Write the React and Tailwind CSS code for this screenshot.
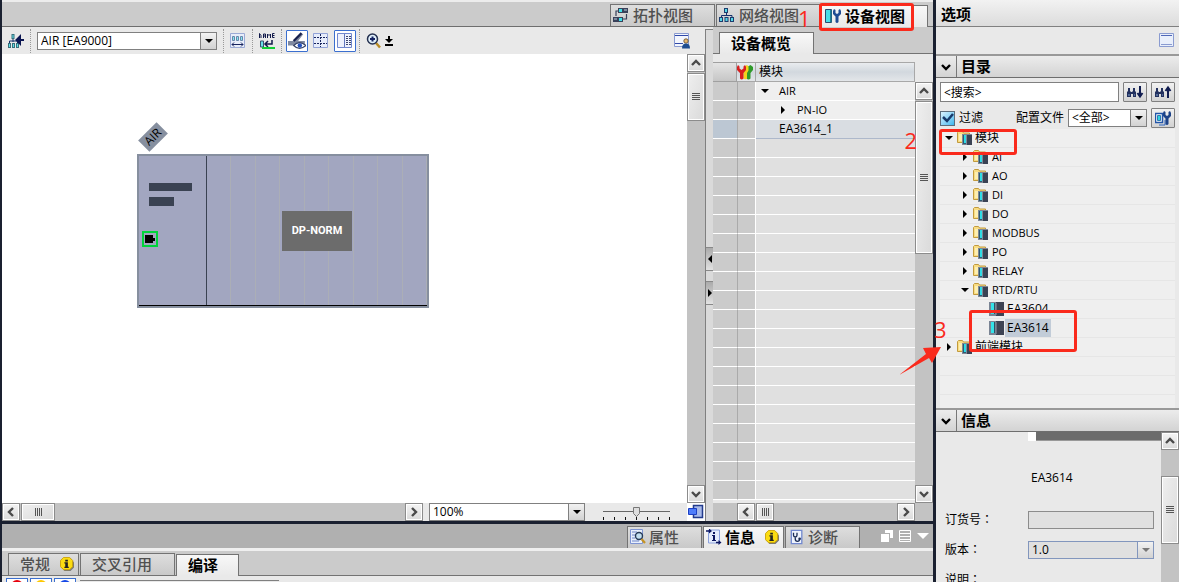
import React, { useState } from 'react';

// --- Data ---
const GROUPS = ['AI', 'AO', 'DI', 'DO', 'MODBUS', 'PO', 'RELAY'];

const OVERVIEW_ROWS = [
    { name: 'AIR', arrow: 'down' },
    { name: 'PN-IO', arrow: 'right', nested: true },
    { name: 'EA3614_1', selected: true },
];

const EMPTY_ROWS = Array.from({ length: 19 }, (_, i) => i);
const SLOTS = Array.from({ length: 9 }, (_, i) => i);

const FACE = 'bg-gradient-to-b from-[#f2f2f2] to-[#d2d2d2]';

// --- Small glyphs ---
const Arrow = ({ dir, className = '' }) => (
    <svg viewBox="0 0 8 8" className={`w-2 h-2 shrink-0 ${className}`} fill="currentColor">
        {dir === 'down' ? <path d="M0 2h8L4 6z" /> : <path d="M2 0v8l4-4z" />}
    </svg>
);

const Chevron = ({ dir }) => {
    const paths = { up: 'M2 8l4-4 4 4', down: 'M2 4l4 4 4-4', left: 'M8 2L4 6l4 4', right: 'M4 2l4 4-4 4' };
    return (
        <svg viewBox="0 0 12 12" className="w-3 h-3" fill="none" stroke="currentColor" strokeWidth="2.4">
            <path d={paths[dir]} />
        </svg>
    );
};

const ScrollButton = ({ dir, label }) => (
    <button aria-label={label} className="w-[18px] h-[18px] shrink-0 flex items-center justify-center border border-[#8c8c8c] bg-gradient-to-b from-[#f4f4f4] to-[#dadada] text-[#4a4a4a] shadow-[inset_0_0_0_1px_#fff]">
        <Chevron dir={dir} />
    </button>
);

const Thumb = ({ vertical, className }) => (
    <div className={`flex items-center justify-center shrink-0 border border-[#8c8c8c] shadow-[inset_0_0_0_1px_#fff] bg-gradient-to-br from-[#efefef] to-[#dadada] ${className}`}>
        <svg viewBox="0 0 8 8" className={`w-2 h-2 ${vertical ? '' : 'rotate-90'}`} stroke="#555" strokeWidth="1">
            <path d="M0 .5h8M0 2.5h8M0 4.5h8M0 6.5h8" />
        </svg>
    </div>
);

const SelectBox = ({ label, options, className = '', disabled }) => (
    <div className={`relative h-[18px] border bg-white ${disabled ? 'border-[#8296bd]' : 'border-[#808080]'} ${className}`}>
        <select
            aria-label={label}
            disabled={disabled}
            className={`appearance-none block w-full h-full pl-[3px] pr-4 text-xs leading-4 opacity-100 text-black outline-none ${disabled ? 'bg-[#e0e0e0]' : 'bg-white'}`}
        >
            {options.map((o) => <option key={o}>{o}</option>)}
        </select>
        <span className={`pointer-events-none absolute right-0 top-0 bottom-0 w-4 flex items-center justify-center border-l ${FACE} ${disabled ? 'border-[#8296bd] text-[#777]' : 'border-[#808080] text-black'}`}>
            <Arrow dir="down" />
        </span>
    </div>
);

// --- Icons ---
const Icon = ({ children, className = '' }) => (
    <svg viewBox="0 0 16 16" className={`w-4 h-4 shrink-0 ${className}`} fill="none">{children}</svg>
);

const TopologyIcon = () => (
    <Icon>
        <path d="M6 4H3v5M10 12h3.500V7" stroke="#39415a" strokeWidth="1.200" />
        <path d="M5 1h10v5H5zM0 10h10v5H0z" fill="#39415a" />
        <path d="M6 2h3v3H6zM6 11h3v3H6z" fill="#3fe0ea" />
        <path d="M11 2h3v2h-3zM1 11h3v2H1z" fill="#7c879b" />
    </Icon>
);

const NetworkIcon = () => (
    <Icon>
        <path d="M7.500 6v3M2.500 10V8.500h10.500V10" stroke="#17306b" />
        <path d="M5 1h4v5H5zM0 10h4v5H0zM5.500 10h4v5h-4zM11 10h4v5h-4z" fill="#1d3c6e" />
        <path d="M6 2h2v3H6zM1 11h2v3H1zM6.500 11h2v3h-2zM12 11h2v3h-2z" fill="#55d8e6" />
    </Icon>
);

// Double-ended wrench with an open jaw on top
const WrenchPath = ({ x = 0, fill }) => (
    <path transform={`translate(${x} 0)`} d="M1 1L0 3v3l2.500 2.500V14q1.500 2 3 0V8.500L8 6V3L7 1 5.500 2v3L4 6 2.500 5V2z" fill={fill} />
);

const WrenchesIcon = () => (
    <Icon>
        <path d="M11 2.500l2.500-1.500L16 3v3l-2.500 3v5.500q-2 2-4 0V8z" fill="#2f9a2b" />
        <path d="M7.500 2.500L10 1l1.500 1.500v4L10 9v5.500q-1.500 1.500-3.500 0V8z" fill="#f4d21c" />
        <path d="M1 1L0 3v3l3 3v5.500q1.500 2 3.500 0V9L9 6V3L8 1 6.500 2.500v2L4.500 6l-2-1.500v-2z" fill="#d71f1f" />
    </Icon>
);

const DeviceIcon = () => (
    <Icon>
        <path d="M.5 1.500h6v13h-6z" fill="#48dfe8" stroke="#284d70" />
        <path d="M5 2h1.500v12H5z" fill="#1c7f96" />
        <WrenchPath x={8} fill="#204c94" />
    </Icon>
);

const FolderIcon = () => (
    <Icon>
        <path d="M.5 12.500V2.500l1-1h4l1 1.500h6v9.500z" fill="#f8dc82" stroke="#c29a3c" />
        <path d="M2 4h9v7H2z" fill="#fdeeb0" />
        <path d="M5 4h10v11H5z" fill="#7f8795" />
        <path d="M6 5h3v9H6z" fill="#2d5a72" />
        <path d="M7 5h2v8H7z" fill="#2fdce6" />
        <path d="M10 5h5v10h-5z" fill="#3a4254" />
    </Icon>
);

const ModuleIcon = () => (
    <Icon>
        <path d="M0 1h7v14H0z" fill="#7a8494" />
        <path d="M2 2h3v11H2z" fill="#35e2e8" />
        <path d="M5 2h1v11H5z" fill="#2c5365" />
        <path d="M7 1h8v14H7z" fill="#3d4353" />
        <path d="M7 2h1v12H7z" fill="#69707f" />
    </Icon>
);

const WindowIcon = () => (
    <Icon>
        <path d="M.5.5h14v13H.5z" fill="#e9effb" stroke="#8a9bd0" />
        <path d="M2 2.500h11" stroke="#5068b8" />
        <path d="M2 11.500h11" stroke="#8a9bd0" />
    </Icon>
);

const UserWindowIcon = () => (
    <Icon>
        <path d="M.5.5h14v13H.5z" fill="#f3f6fd" stroke="#8a9bd0" />
        <path d="M1 2.500h13M1 10.500h8" stroke="#3049a8" strokeWidth="1.200" />
        <circle cx="12" cy="8" r="2.200" fill="#e6b870" stroke="#5a4528" strokeWidth=".8" />
        <path d="M8 15.500q0-5 4-5t4 5z" fill="#1f4d90" />
    </Icon>
);

const InfoBadge = () => (
    <Icon className="w-[14px]! h-[14px]!">
        <path d="M5 2h7l4 4v6l-4 4H5l-3-4z" fill="#777" />
        <path d="M4 .5h7L14.500 4v7L11 14.500H4L.5 11V4z" fill="#fbdc12" stroke="#c79c00" />
        <path d="M6 3h3v2H6zM5 6h4v5h1v1.500H5V11h1V7.500H5z" fill="#222" />
    </Icon>
);

const PropertyIcon = () => (
    <Icon>
        <path d="M.5.5h12v14H.5z" fill="#e8effc" stroke="#7d93d2" />
        <path d="M2 3h5M2 6h3M2 9h3M2 12h7" stroke="#6f86c8" />
        <circle cx="9" cy="7" r="3.500" fill="#c3dff0" stroke="#263a58" strokeWidth="1.400" />
        <path d="M11.500 10l3.500 4" stroke="#c59325" strokeWidth="2.200" />
    </Icon>
);

const InfoIcon = () => (
    <Icon>
        <path d="M2.500 1h11v13h-11z" fill="#e3ebfb" stroke="#8aa0dc" />
        <path d="M0 2h4M10 13.500h3" stroke="#0b1660" strokeWidth="1.500" />
        <path d="M3-.5L6 2 3 4.500zM12.500 11l3 2.500-3 2.500z" fill="#0b1660" />
        <path d="M7 3h2v2H7zM6 6h3v5h1v1H6v-1h1V7H6z" fill="#0b1660" />
    </Icon>
);

const DiagnosisIcon = () => (
    <Icon className="w-[14px]!">
        <path d="M1.500.5h12v15h-12z" fill="#eef3fd" stroke="#7188cf" strokeWidth="1.500" />
        <path d="M4 3v3q0 2 2 2t2-2V3M6 8v2q0 3 2.500 3t2.500-3" stroke="#1c2d55" strokeWidth="1.500" />
        <circle cx="11" cy="10" r="1.500" fill="#1c2d55" />
    </Icon>
);

const BinocularsIcon = ({ up }) => (
    <Icon className="w-[18px]! -mx-px">
        <path d="M0 13V8l1-1V4h2v3l1 1h1l1-1V4h2v3l1 1v5H6v-3H4v3z" fill="#22305e" />
        <path d="M1 11h2M7 11h1" stroke="#7fa1cc" />
        {up ? <path d="M13 14V4M10.500 7L13 3.500 15.500 7" stroke="#101c50" strokeWidth="2" />
            : <path d="M13 2v10M10.500 9l2.500 3.500L15.500 9" stroke="#101c50" strokeWidth="2" />}
    </Icon>
);

const ProfileIcon = () => (
    <Icon>
        <path d="M.5 3.500h7v9h-7z" fill="#fff" stroke="#2355a8" strokeWidth="1.500" />
        <path d="M2.500 5.500h3v5h-3z" fill="#30d4e0" stroke="#2a7cb0" />
        <path d="M4 15h6v-5" stroke="#2f66c0" />
        <WrenchPath x={8} fill="#1d4388" />
    </Icon>
);

const ToolButton = ({ label, active, children }) => (
    <button aria-label={label} className={`w-[22px] h-[22px] flex items-center justify-center shrink-0 ${active ? 'border border-[#3b6fcf] bg-white rounded-[1px]' : ''}`}>
        {children}
    </button>
);

const Divider = () => <span className="h-6 border-l border-dotted border-[#999] mx-[3px]" />;

// --- Tabs ---
const Tab = ({ active, className = '', children }) => (
    <button className={`relative flex items-center h-[22px] shrink-0 border border-[#737373] border-b-0 pb-0.5 text-[15px] leading-5 whitespace-nowrap ${active ? 'bg-gradient-to-b from-[#f8f8f8] to-[#e9e9e9] font-bold text-black' : 'bg-gradient-to-b from-[#dedede] to-[#c9c9c9] font-medium text-[#505050]'} ${className}`}>
        {children}
    </button>
);

const Mark = ({ className, children }) => (
    <span className={`absolute z-20 pointer-events-none font-['Open_Sans',sans-serif] font-normal text-[22px] leading-6 text-[#fa2a1c] ${className}`}>{children}</span>
);

const RedBox = ({ className }) => (
    <span className={`absolute z-20 pointer-events-none rounded-[3px] border-3 border-[#fa2a1c] ${className}`} />
);

const ViewTabs = () => (
    <div className="h-[27px] shrink-0 flex items-end justify-end gap-px border-t-2 border-t-[#ececec] border-b border-b-[#6e6e6e] bg-[#cbcbcb] pr-[5px]">
        <Tab className="w-[105px] gap-1 pl-0.5"><TopologyIcon />拓扑视图</Tab>
        <Tab className="w-[104px] gap-1 pl-0.5"><NetworkIcon />网络视图</Tab>
        <Tab active className="w-[107px] gap-1 pl-[3px] -mb-px">
            <DeviceIcon />设备视图
            <RedBox className="-left-[3px] -top-[3px] w-[95px] h-7" />
            <Mark className="-left-6 top-0">1</Mark>
        </Tab>
    </div>
);

// --- Editor ---
const EditorToolbar = () => (
    <div className="h-[27px] shrink-0 flex items-center bg-[#e9e9e9] pl-[3px]">
        <ToolButton label="网络">
            <Icon className="w-[18px]!">
                <path d="M5 4v5M1.500 10V8h8v2" stroke="#17306b" />
                <path d="M3.500 1h3v5h-3zM0 10h3v5H0zM4 10h3v5H4zM8 10h3v5H8z" fill="#37707c" />
                <path d="M4.500 2h1v3h-1zM1 11h1v3H1zM5 11h1v3H5zM9 11h1v3H9z" fill="#62e0e8" />
                <path d="M16 7h-6M12 3.500L8.500 7l3.500 3.500z" stroke="#0c1652" strokeWidth="2" fill="#0c1652" />
            </Icon>
        </ToolButton>
        <Divider />
        <SelectBox label="设备" options={['AIR [EA9000]']} className="w-[180px] mx-[3px]" />
        <Divider />
        <ToolButton label="地址">
            <Icon>
                <path d="M.5.5h14v14H.5z" fill="#e8edfa" stroke="#9cabd6" />
                <path d="M2.500 3.500h2v4h-2zM6.500 3.500h2v4h-2zM10.500 3.500h2v4h-2z" fill="#80e8f0" stroke="#6987aa" />
                <path d="M2 11.500h11M4 9.500l-2 2 2 2M11 9.500l2 2-2 2" stroke="#17245e" />
            </Icon>
        </ToolButton>
        <Divider />
        <ToolButton label="名称">
            <Icon>
                <path d="M.5 5V.5L2 2.500V5M4.500 5V1h2v4M4.500 3h2M8.500 5V1l1.500 1.500L11.500 1v4M15.500.5h-2v4h2M13.500 2.500h2" stroke="#11194a" />
                <path d="M1.500 8h3v6h-3z" fill="#6be0e8" stroke="#365470" />
                <path d="M13 7v4H6M9 8l-3 3 3 3" stroke="#11194a" strokeWidth="1.500" />
                <path d="M3 15h13" stroke="#12cf35" strokeWidth="2" />
            </Icon>
        </ToolButton>
        <Divider />
        <div className="flex gap-0.5 pl-px">
            <ToolButton label="显示模块" active>
                <Icon className="w-[18px]! h-[18px]!">
                    <path d="M0 8h5l7-7 1.500 1L9 8h6v4H0z" fill="#8089a0" />
                    <path d="M5 8l7-7" stroke="#17204e" strokeWidth="2" />
                    <path d="M5 12q5-5 11 0-6 5-11 0z" fill="#fff" stroke="#394466" />
                    <circle cx="10.500" cy="12" r="2" fill="#2451bd" />
                </Icon>
            </ToolButton>
            <ToolButton label="网格">
                <Icon>
                    <path d="M.5.5h14v14H.5z" fill="#e6ecfb" stroke="#91a2d7" />
                    <path d="M1 4.500h13M1 10.500h13M7.500 1v13" stroke="#17245e" strokeDasharray="2 1" />
                </Icon>
            </ToolButton>
            <ToolButton label="表格" active>
                <Icon>
                    <path d="M.5.5h14v14H.5z" fill="#eef2fd" stroke="#7188cf" />
                    <path d="M7.500 1v13" stroke="#6277bd" />
                    <path d="M9 3.500h5M9 5.500h5M9 7.500h5M9 9.500h5M9 11.500h5" stroke="#3c4770" strokeDasharray="2 1" />
                </Icon>
            </ToolButton>
        </div>
        <Divider />
        <ToolButton label="缩放">
            <Icon>
                <path d="M10 10l4 4.500" stroke="#b98b24" strokeWidth="2.500" />
                <circle cx="6.500" cy="6" r="5" fill="#e0effa" stroke="#24304f" strokeWidth="1.500" />
                <path d="M4 6h5M6.500 3.500v5" stroke="#132263" strokeWidth="2" />
            </Icon>
        </ToolButton>
        <svg viewBox="0 0 8 10" className="w-2 h-[10px]"><path d="M3 0h2v3h3L4 7 0 3h3zM0 8h8v2H0z" /></svg>
        <span className="ml-auto mr-3"><ToolButton label="保存窗口设置"><UserWindowIcon /></ToolButton></span>
    </div>
);

const Rack = () => (
    <>
        <div className="absolute left-[138px] top-[75px] w-[26px] h-4 -rotate-45 bg-[#868f9f] text-xs leading-4 text-center">AIR</div>
        <div className="absolute left-[135px] top-[100px] w-[292px] h-[154px] flex border-2 border-[#868f9f] bg-[#a2a6c0]">
            <div className="w-[68px] shrink-0 border-r border-[#3a4252] pl-[10px] pt-[27px]">
                <div className="w-[43px] h-2 bg-[#3a4252]" />
                <div className="w-[25px] h-[9px] mt-1.5 bg-[#3a4252]" />
                <div className="w-4 h-4 mt-[25px] -ml-[7px] border-2 border-[#00d43a] flex items-center pl-px">
                    <div className="w-2 h-2 bg-black" />
                    <div className="w-0.5 h-[3px] bg-black" />
                </div>
            </div>
            {SLOTS.map((s) => <div key={s} className="flex-1 border-r border-[#abaeb6] last:border-r-0" />)}
            <div className="absolute left-0 right-0 bottom-0 h-px bg-black" />
            <div className="absolute left-[143px] top-[55px] w-[70px] h-10 flex items-center justify-center bg-[#6c6c6c] text-white text-[11px] font-bold font-['Roboto',sans-serif]">DP-NORM</div>
        </div>
    </>
);

const EditorFooter = () => (
    <div className="h-[18px] shrink-0 flex bg-[#e9e9e9]">
        <div className="flex-1 flex bg-[#c3c3c3] gap-px">
            <ScrollButton dir="left" label="向左" />
            <Thumb className="w-[34px] h-[18px]" />
            <span className="ml-auto"><ScrollButton dir="right" label="向右" /></span>
        </div>
        <SelectBox label="缩放比例" options={['100%']} className="w-[156px] ml-1.5" />
        <div className="relative w-[67px] ml-[18px] mr-[17px]">
            <svg viewBox="0 0 67 18" className="w-full h-full">
                <path d="M0 8.500h67" stroke="#666" />
                <path d="M.5 14v3M11.500 14v3M22.500 14v3M33.500 14v3M44.500 14v3M55.500 14v3M66.500 14v3" stroke="#111" />
                <path d="M30.500 4.500h6v6l-3 3-3-3z" fill="#ddd" stroke="#777" />
            </svg>
            <input type="range" aria-label="缩放滑块" className="absolute inset-0 w-full h-full opacity-0" />
        </div>
        <span className="w-[18px] bg-white flex items-center justify-center">
            <Icon>
                <path d="M5.500 1.500h9v12h-9z" fill="#a9bae8" stroke="#233b8c" strokeWidth="1.500" />
                <path d="M.5 4.500h8v6h-8z" fill="#4f7dfa" stroke="#1c3fc4" />
            </Icon>
        </span>
    </div>
);

const Editor = () => (
    <div className="flex-1 min-w-0 flex flex-col">
        <EditorToolbar />
        <div className="flex-1 min-h-0 flex bg-white">
            <div className="relative flex-1 overflow-hidden"><Rack /></div>
            <div className="w-[18px] flex flex-col gap-px bg-[#c3c3c3]">
                <ScrollButton dir="up" label="向上" />
                <Thumb vertical className="w-[18px] h-12" />
                <span className="mt-auto"><ScrollButton dir="down" label="向下" /></span>
            </div>
        </div>
        <EditorFooter />
    </div>
);

const GRIP = 'h-6 border-y border-[#888] bg-gradient-to-b from-[#aaa] to-[#e2e2e2] flex items-center justify-center';

const Splitter = () => (
    <div className="w-2 mt-0.5 shrink-0 border-l border-t border-[#808080] bg-[#dadada] flex flex-col items-stretch justify-center gap-2.5">
        <button aria-label="收起左侧" className={GRIP}><Arrow dir="right" className="rotate-180" /></button>
        <button aria-label="收起右侧" className={GRIP}><Arrow dir="right" /></button>
    </div>
);

// --- Device overview ---
const HEAD_CELL = 'bg-gradient-to-b from-[#e9ecef] via-[#d2d8de] to-[#e3e6e9] border-y border-[#a8a8a8]';

const Overview = () => (
    <div className="relative w-[220px] shrink-0 flex flex-col bg-[#e9e9e9]">
        <div className="h-[27px] shrink-0 bg-[#cbcbcb] border-b border-[#737373] flex items-end pl-1.5">
            <Tab active className="w-[95px] pl-[11px] -mb-px">设备概览</Tab>
        </div>
        <div className="flex-1 min-h-0 flex pt-2">
            <div className="flex-1 overflow-hidden">
                <table className="w-full table-fixed border-separate border-spacing-0 text-[11px] leading-[18px]">
                    <colgroup><col className="w-6" /><col className="w-[19px]" /><col /></colgroup>
                    <thead>
                        <tr className="h-5">
                            <th className="p-0 bg-gradient-to-b from-[#e4e4e4] to-[#c6c6c6] border-y border-r border-[#a0a0a0]" />
                            <th className={`p-0 border-r ${HEAD_CELL}`}><WrenchesIcon /></th>
                            <th className={`p-0 pl-[3px] text-left text-xs leading-4 font-normal border-r ${HEAD_CELL}`}>模块</th>
                        </tr>
                    </thead>
                    <tbody>
                        {OVERVIEW_ROWS.map((row) => (
                            <tr key={row.name} className="h-[19px]">
                                <td className={`p-0 border-b border-white ${row.selected ? 'bg-[#bcc7d3]' : 'bg-[#cbcbcb]'}`} />
                                <td className="p-0 border-b border-r border-l border-l-[#aaa] border-white bg-[#cbcbcb]" />
                                <td className={`p-0 border-b ${row.selected ? 'bg-[#d9dde2] border-[#adb8cb]' : 'bg-[#efefef] border-white'}`}>
                                    <div className={`flex items-center h-[18px] ${row.nested ? 'pl-[23px] gap-2.5' : row.arrow ? 'pl-[5px] gap-2.5' : 'pl-[23px] text-xs'}`}>
                                        {row.arrow && <Arrow dir={row.arrow} />}{row.name}
                                    </div>
                                </td>
                            </tr>
                        ))}
                        {EMPTY_ROWS.map((r) => (
                            <tr key={r} className="h-[19px]">
                                <td className="p-0 border-b border-white bg-[#cbcbcb]" />
                                <td className="p-0 border-b border-r border-l border-l-[#aaa] border-white bg-[#cbcbcb]" />
                                <td className="p-0 border-b border-white bg-[#e0e0e0]" />
                            </tr>
                        ))}
                    </tbody>
                </table>
            </div>
            <div className="w-[18px] mt-5 flex flex-col gap-px bg-[#c3c3c3]">
                <ScrollButton dir="up" label="概览向上" />
                <Thumb vertical className="w-[18px] h-[153px]" />
                <span className="mt-auto"><ScrollButton dir="down" label="概览向下" /></span>
            </div>
        </div>
        <div className="h-[18px] shrink-0 flex gap-px bg-[#c3c3c3] pl-6 pr-[18px]">
            <ScrollButton dir="left" label="概览向左" />
            <Thumb className="w-[18px] h-[18px]" />
            <span className="ml-auto"><ScrollButton dir="right" label="概览向右" /></span>
        </div>
        <Mark className="right-4 top-[101px]">2</Mark>
    </div>
);

// --- Inspector ---
const Inspector = () => (
    <div className="shrink-0 border-t-3 border-[#1a2030]">
        <div className="h-6 bg-[#b0b0b0] flex items-end justify-end gap-px">
            <Tab className="w-[75px] gap-[3px] pl-0.5"><PropertyIcon />属性</Tab>
            <Tab active className="w-[81px] gap-[3px] pl-0.5"><InfoIcon />信息<span className="ml-auto mr-1"><InfoBadge /></span></Tab>
            <Tab className="w-[75px] gap-1 pl-1"><DiagnosisIcon />诊断</Tab>
            <div className="self-center flex items-center gap-1.5 ml-5 mr-1 text-white">
                <svg viewBox="0 0 12 12" className="w-3 h-3" fill="currentColor"><path d="M4 0h8v8H9V3H4z" /><path d="M0 4h8v8H0z" /></svg>
                <svg viewBox="0 0 12 12" className="w-3 h-3" stroke="currentColor" fill="none"><path d="M.5.5h11v11H.5zM1 3.500h10M1 6.500h10M1 9.500h10" /></svg>
                <svg viewBox="0 0 12 6" className="w-3 h-1.5" fill="currentColor"><path d="M0 0h12L6 6z" /></svg>
            </div>
        </div>
        <div className="h-[3px] bg-[#efefef]" />
        <div className="h-[25px] bg-[#cbcbcb] border-b border-[#737373] flex items-end gap-px pl-1.5">
            <Tab className="w-[71px] pl-[11px]">常规<span className="ml-auto mr-1"><InfoBadge /></span></Tab>
            <Tab className="w-[95px] pl-[11px]">交叉引用</Tab>
            <Tab active className="w-[63px] pl-[11px] -mb-px">编译</Tab>
        </div>
        <div className="h-1.5 overflow-hidden bg-[#e9e9e9] flex gap-0.5 pl-1 pt-0.5">
            {['fill-red-600', 'fill-yellow-400', 'fill-blue-700'].map((color) => (
                <span key={color} className="w-[22px] h-5 shrink-0 flex justify-center border border-[#3b6fcf] bg-white">
                    <svg viewBox="0 0 12 12" className={`w-3 h-3 mt-px ${color}`}><circle cx="6" cy="6" r="6" /></svg>
                </span>
            ))}
            <span className="w-[199px] h-px mt-0.5 ml-0.5 bg-[#808080]" />
        </div>
    </div>
);

// --- Right panel ---
const SectionHeader = ({ title }) => (
    <div className="h-6 shrink-0 flex items-center border-t-2 border-t-[#999] border-b border-b-[#6e6e6e] bg-gradient-to-b from-[#ececec] to-[#d3d3d3]">
        <button aria-label={`折叠${title}`} className="w-[21px] h-full flex items-center justify-center border-r border-[#777]"><Chevron dir="down" /></button>
        <h2 className="pl-1 pb-0.5 text-[15px] leading-5 font-bold">{title}</h2>
    </div>
);

const TreeRow = ({ level = 0, arrow, icon, label, selected, cjk }) => {
    const pad = ['pl-[5px]', 'pl-[21px]', 'pl-[49px]'][level];
    return (
        <li className={`h-[19px] flex items-center border-b border-[#e6e6e6] ${pad}`}>
            {arrow && <Arrow dir={arrow} className="mr-1" />}
            {icon}
            {label && <span className={`px-0.5 h-[18px] leading-[18px] ${level === 2 || cjk ? 'text-xs' : 'text-[11px] ml-px'} ${selected ? 'bg-[#c2ccd8]' : ''}`}>{label}</span>}
        </li>
    );
};

const FaceButton = ({ label, children }) => (
    <button aria-label={label} className={`w-6 h-5 shrink-0 flex items-center justify-center border border-[#808080] rounded-[1px] ${FACE}`}>{children}</button>
);

const Catalog = () => {
    const [filter, setFilter] = useState(true);
    return (
        <div className="relative flex-1 min-h-0 flex flex-col bg-[#e9e9e9]">
            <SectionHeader title="目录" />
            <div className="px-1 pt-1 flex flex-col gap-1.5">
                <div className="flex gap-1">
                    <input aria-label="搜索" defaultValue="<搜索>" className="flex-1 min-w-0 h-5 px-[3px] text-xs bg-white border border-[#808080] outline-none" />
                    <FaceButton label="向下搜索"><BinocularsIcon /></FaceButton>
                    <FaceButton label="向上搜索"><BinocularsIcon up /></FaceButton>
                </div>
                <div className="flex items-center text-xs">
                    <label className="relative flex items-center gap-1">
                        <input
                            type="checkbox"
                            checked={filter}
                            onChange={(e) => setFilter(e.target.checked)}
                            className="appearance-none w-[15px] h-[15px] border border-[#5d6d7c] bg-gradient-to-br from-[#d8f3ff] to-[#35b8ee]"
                        />
                        {filter && <svg viewBox="0 0 12 12" className="absolute left-0.5 w-3 h-3 pointer-events-none" fill="none" stroke="#173a6b" strokeWidth="2.500"><path d="M1 5l4 4 6-7" /></svg>}
                        过滤
                    </label>
                    <span className="ml-auto mr-1">配置文件</span>
                    <SelectBox label="配置文件" options={['<全部>']} className="w-[79px] mr-1" />
                    <FaceButton label="编辑配置文件"><ProfileIcon /></FaceButton>
                </div>
            </div>
            <ul className="mx-1 flex-1 min-h-0 overflow-hidden bg-[#efefef] mt-px">
                <TreeRow arrow="down" icon={<FolderIcon />} label="模块" cjk />
                {GROUPS.map((g) => <TreeRow key={g} level={1} arrow="right" icon={<FolderIcon />} label={g} />)}
                <TreeRow level={1} arrow="down" icon={<FolderIcon />} label="RTD/RTU" />
                <TreeRow level={2} icon={<ModuleIcon />} label="EA3604" />
                <TreeRow level={2} icon={<ModuleIcon />} label="EA3614" selected />
                <TreeRow arrow="right" icon={<FolderIcon />} label="前端模块" cjk />
                <TreeRow />
                <TreeRow />
                <TreeRow />
            </ul>
            <RedBox className="left-[3px] top-[75px] w-[78px] h-[26px]" />
            <RedBox className="left-[33px] top-[256px] w-[108px] h-[42px]" />
            <Mark className="-left-0.5 top-[263px]">3</Mark>
            <svg viewBox="0 0 42 30" className="absolute z-20 -left-9 top-[293px] w-[42px] h-[30px] pointer-events-none" fill="#fa2a1c">
                <path d="M-1 28L26 7l-3-6 18-1-9 16-3-5z" />
            </svg>
        </div>
    );
};

// Traditional variant keeps the colon centred in its square
const Colon = () => <span className="font-['Noto_Sans_CJK_TC',sans-serif]">：</span>;

const InfoPanel = () => (
    <div className="h-[174px] shrink-0 flex flex-col bg-[#e9e9e9] text-xs">
        <SectionHeader title="信息" />
        <div className="flex-1 min-h-0 flex overflow-hidden">
            <div className="flex-1 min-w-0">
                <div className="flex h-[9px] ml-[92px]">
                    <div className="w-2 bg-white" />
                    <div className="flex-1 bg-[#6c6c6c] border-b border-[#999]" />
                </div>
                <p className="mt-7 ml-[95px] leading-[18px]">EA3614</p>
                <div className="grid grid-cols-[83px_1fr] auto-rows-[18px] gap-y-3 pl-[9px] pr-[7px] mt-6 leading-4">
                    <label htmlFor="order">订货号<Colon /></label>
                    <input id="order" readOnly className="w-full h-[18px] border border-[#8c8c8c] bg-[#e0e0e0]" />
                    <span>版本<Colon /></span>
                    <SelectBox label="版本" options={['1.0']} disabled />
                    <span>说明<Colon /></span>
                </div>
            </div>
            <div className="w-[18px] bg-[#c3c3c3] flex flex-col">
                <ScrollButton dir="up" label="信息向上" />
                <Thumb vertical className="w-[18px] h-[68px] mt-[26px]" />
            </div>
        </div>
    </div>
);

const OptionsPanel = () => (
    <aside className="w-[246px] shrink-0 flex flex-col border-l-3 border-[#1a2030]">
        <div className="h-[27px] shrink-0 border-b border-[#808080] bg-gradient-to-b from-[#f2f2f2] to-[#dcdcdc] pl-[5px] pt-1">
            <h2 className="text-[15px] leading-5 font-bold">选项</h2>
        </div>
        <div className="h-[27px] shrink-0 flex items-center justify-end pr-1 bg-[#e9e9e9]"><WindowIcon /></div>
        <Catalog />
        <InfoPanel />
    </aside>
);

export default function App() {
    return (
        <div className="h-screen flex overflow-hidden bg-[#e9e9e9] text-black font-['Open_Sans','Noto_Sans_CJK_SC',sans-serif]">
            <div className="flex-1 min-w-0 flex flex-col border-l-2 border-[#1a2030]">
                <ViewTabs />
                <div className="flex-1 min-h-0 flex">
                    <Editor />
                    <Splitter />
                    <Overview />
                </div>
                <Inspector />
            </div>
            <OptionsPanel />
        </div>
    );
}
